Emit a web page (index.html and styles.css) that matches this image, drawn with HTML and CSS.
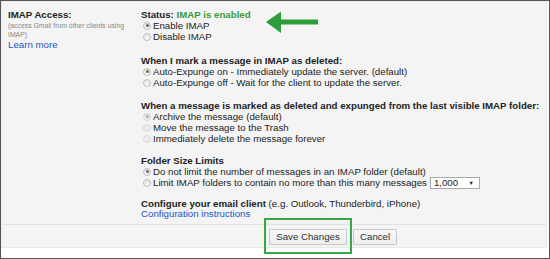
FILE: index.html
```html
<!DOCTYPE html>
<html>
<head>
<meta charset="utf-8">
<link rel="stylesheet" href="styles.css">
</head>
<body>
<div class="frame">
  <div class="panel">
    <div class="main">
      <div class="label-col">
        <div class="title">IMAP Access:</div>
        <div class="hint">(access Gmail from other clients using IMAP)</div>
        <a class="link" href="#">Learn more</a>
      </div>
      <div class="settings">
        <div class="group g1">
          <div class="heading">Status: <span class="ok">IMAP is enabled</span></div>
          <div class="opt"><span class="radio checked"></span>Enable IMAP</div>
          <div class="opt"><span class="radio"></span>Disable IMAP</div>
        </div>
        <div class="group g2">
          <div class="heading">When I mark a message in IMAP as deleted:</div>
          <div class="opt"><span class="radio checked"></span>Auto-Expunge on - Immediately update the server. (default)</div>
          <div class="opt"><span class="radio"></span>Auto-Expunge off - Wait for the client to update the server.</div>
        </div>
        <div class="group g3">
          <div class="heading">When a message is marked as deleted and expunged from the last visible IMAP folder:</div>
          <div class="opt"><span class="radio checked disabled"></span>Archive the message (default)</div>
          <div class="opt"><span class="radio disabled"></span>Move the message to the Trash</div>
          <div class="opt"><span class="radio disabled"></span>Immediately delete the message forever</div>
        </div>
        <div class="group g4">
          <div class="heading">Folder Size Limits</div>
          <div class="opt"><span class="radio checked"></span>Do not limit the number of messages in an IMAP folder (default)</div>
          <div class="opt"><span class="radio"></span>Limit IMAP folders to contain no more than this many messages<span class="select"><span>1,000</span><span class="caret">&#9660;</span></span></div>
        </div>
        <div class="group g5">
          <div class="line"><b>Configure your email client</b> (e.g. Outlook, Thunderbird, iPhone)</div>
          <a class="link" href="#">Configuration instructions</a>
        </div>
      </div>
      <svg class="arrow" width="58" height="26" viewBox="0 0 58 26">
        <polygon points="2,13 17,2.5 17,10.5 54,10.5 54,15.5 17,15.5 17,24" fill="#2d9d3b"/>
      </svg>
    </div>
    <div class="footer">
      <span class="save-wrap">
        <button class="btn save">Save Changes</button>
        <span class="highlight"></span>
      </span>
      <button class="btn">Cancel</button>
    </div>
  </div>
</div>
</body>
</html>
```

FILE: styles.css
```css
* { box-sizing: border-box; }
html, body { margin: 0; padding: 0; background: #fff; }
body {
  font-family: "Liberation Sans", Arial, sans-serif;
  font-size: 9.7px;
  line-height: 11px;
  color: #222;
}
.frame {
  width: 550px;
  height: 259px;
  border: 1px solid #555;
  background: #fff;
  padding: 0 2px 9px 0;
}
.panel {
  height: 247px;
  background: #f4f4f4;
  border: 1px solid #e9e9e9;
  display: flex;
  flex-direction: column;
}
.main {
  flex: 1;
  display: flex;
  position: relative;
}
.label-col {
  width: 139px;
  padding: 6.5px 0 0 6px;
}
.title { font-weight: bold; }
.hint {
  font-size: 6.85px;
  line-height: 9px;
  color: #888;
  width: 126px;
  margin-top: 1px;
}
.link {
  display: block;
  color: #1a56c4;
  text-decoration: none;
}
.settings {
  padding-top: 6.5px;
}
.heading { font-weight: bold; }
.ok { color: #3a9b36; }
.g2 { margin-top: 13px; }
.g3 { margin-top: 12px; }
.g4 { margin-top: 11px; }
.g5 { margin-top: 9px; }
.g5 .line { line-height: 11px; }
.g5 .link { line-height: 10px; }
.opt { white-space: nowrap; }
.radio {
  display: inline-block;
  width: 8px;
  height: 8px;
  border-radius: 50%;
  border: 1px solid #bdbdbd;
  background: linear-gradient(#e4e4e4, #f8f8f8);
  vertical-align: -1px;
  margin: 0 2px 0 2px;
  position: relative;
}
.radio.checked::after {
  content: "";
  position: absolute;
  left: 1.5px;
  top: 1.5px;
  width: 3px;
  height: 3px;
  border-radius: 50%;
  background: #666;
}
.radio.disabled {
  border-color: #d6d6d6;
  background: #ececec;
}
.radio.disabled.checked::after { background: #aaa; }
.select {
  display: inline-flex;
  justify-content: space-between;
  align-items: center;
  width: 50px;
  height: 12px;
  border: 1px solid #a9a9a9;
  background: #fff;
  margin-left: 3px;
  padding: 0 5px 0 3px;
  vertical-align: middle;
  line-height: 10px;
  font-size: 9.7px;
}
.caret { font-size: 5.5px; color: #222; }
.arrow {
  position: absolute;
  left: 262px;
  top: 7px;
}
.footer {
  height: 23px;
  border-top: 1px solid #e2e2e2;
  padding: 4px 0 0 267px;
  display: flex;
  align-items: flex-start;
  gap: 6px;
}
.save-wrap { position: relative; display: inline-block; }
.btn {
  font-family: "Liberation Sans", Arial, sans-serif;
  font-size: 9.7px;
  color: #333;
  height: 16px;
  line-height: 14px;
  padding: 0 6px;
  margin: 0;
  border: 1px solid #c9c9c9;
  border-radius: 1px;
  background: linear-gradient(#f8f8f8, #ededed);
}
.save { width: 78px; padding: 0; }
.highlight {
  position: absolute;
  left: -5px;
  top: -11px;
  width: 88px;
  height: 36px;
  border: 2.5px solid #35a845;
}
```
